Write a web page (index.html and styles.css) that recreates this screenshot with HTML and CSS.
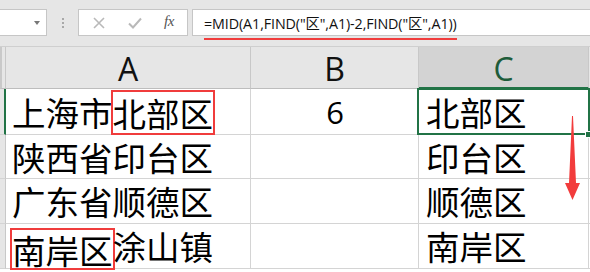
FILE: index.html
```html
<!DOCTYPE html>
<html lang="zh">
<head>
<meta charset="utf-8">
<link rel="stylesheet" href="styles.css">
</head>
<body>
<div class="toolbar">
  <div class="namebox"><span class="dd"></span></div>
  <div class="grip"><i></i><i></i><i></i></div>
  <div class="btns">
    <svg class="ico" width="12" height="12" viewBox="0 0 12 12"><path d="M1 1L11 11M11 1L1 11" stroke="#b9b9b9" stroke-width="1.6" fill="none"/></svg>
    <svg class="ico" width="14" height="12" viewBox="0 0 14 12"><path d="M1 6.5L5 10.5L13 1.5" stroke="#b9b9b9" stroke-width="2" fill="none"/></svg>
    <span class="fx">fx</span>
  </div>
  <div class="formula"><span class="ftext">=MID(A1,FIND("区",A1)-2,FIND("区",A1))</span></div>
</div>
<div class="sheet">
  <div class="rh hdr"></div>
  <div class="ch">A</div>
  <div class="ch">B</div>
  <div class="ch sel">C</div>
  <div class="edge hdr"></div>

  <div class="rh selrow"></div>
  <div class="cell ca">上海市<span class="mark m1">北部区</span></div>
  <div class="cell cb">6</div>
  <div class="cell cc active">北部区</div>
  <div class="edge"></div>

  <div class="rh"></div>
  <div class="cell ca">陕西省印台区</div>
  <div class="cell cb"></div>
  <div class="cell cc">印台区</div>
  <div class="edge"></div>

  <div class="rh"></div>
  <div class="cell ca">广东省顺德区</div>
  <div class="cell cb"></div>
  <div class="cell cc">顺德区</div>
  <div class="edge"></div>

  <div class="rh"></div>
  <div class="cell ca"><span class="mark m4">南岸区</span>涂山镇</div>
  <div class="cell cb"></div>
  <div class="cell cc">南岸区</div>
  <div class="edge"></div>

  <svg class="arrow" width="20" height="86" viewBox="0 0 20 86"><path d="M9 0L10 0L13 67L17 67L9.5 84L2 67L6 67Z" fill="#f23c3c"/></svg>
</div>
</body>
</html>
```
FILE: styles.css
```css
html, body {
  margin: 0;
  padding: 0;
  background: #ffffff;
  width: 590px;
  height: 272px;
  overflow: hidden;
}
.toolbar {
  height: 46px;
  background: #e6e6e6;
  position: relative;
  box-sizing: border-box;
  padding-top: 9px;
  display: flex;
  align-items: flex-start;
}
.namebox {
  width: 47px;
  height: 27px;
  box-sizing: border-box;
  background: #fff;
  border: 1px solid #c6c6c6;
  border-left: none;
  position: relative;
}
.dd {
  position: absolute;
  left: 34px;
  top: 11px;
  width: 0;
  height: 0;
  border-left: 3.5px solid transparent;
  border-right: 3.5px solid transparent;
  border-top: 4px solid #777;
}
.grip {
  width: 31px;
  height: 27px;
  display: flex;
  flex-direction: column;
  align-items: center;
  justify-content: center;
  gap: 2px;
}
.grip i {
  display: block;
  width: 2px;
  height: 2px;
  background: #a8a8a8;
}
.btns {
  width: 110px;
  height: 27px;
  box-sizing: border-box;
  background: #fff;
  border: 1px solid #c6c6c6;
  display: flex;
  align-items: center;
  padding-left: 14px;
}
.btns .ico:nth-child(1) { margin-right: 23px; }
.btns .ico:nth-child(2) { margin-right: 22px; }
.fx {
  font-family: "Liberation Serif", serif;
  font-style: italic;
  font-size: 15px;
  color: #555;
  letter-spacing: -0.5px;
  margin-top: -2px;
}
.formula {
  margin-left: 4px;
  flex: 1;
  height: 27px;
  box-sizing: border-box;
  background: #fff;
  border: 1px solid #c6c6c6;
  border-right: none;
  padding-left: 11px;
  display: flex;
  align-items: center;
}
.ftext {
  font-family: "Open Sans", "Noto Sans CJK SC", sans-serif;
  font-size: 14.3px;
  color: #111;
  position: relative;
  letter-spacing: -0.1px;
  white-space: nowrap;
}
.ftext::after {
  content: "";
  position: absolute;
  left: 0;
  right: 0;
  bottom: -7px;
  height: 2px;
  background: #f03c3c;
}
.sheet {
  position: relative;
  display: grid;
  grid-template-columns: 6px 245px 168px 170px 1px;
  grid-template-rows: 42px 46px 44px 45px 45px;
  border-top: 1px solid #cfcfcf;
  font-family: "Noto Sans CJK SC", sans-serif;
}
.rh {
  background: #e6e6e6;
  border-right: 1px solid #c8c8c8;
  border-bottom: 1px solid #d4d4d4;
}
.rh.hdr {
  border-left: 2px solid #c9c9c9;
  border-bottom: 1px solid #bdbdbd;
}
.rh.selrow {
  border-right: 2px solid #217346;
}
.ch {
  background: #e6e6e6;
  border-right: 1px solid #c8c8c8;
  border-bottom: 1px solid #bdbdbd;
  display: flex;
  align-items: center;
  justify-content: center;
  font-family: "Open Sans", sans-serif;
  font-size: 32px;
  color: #111;
  padding-top: 2px;
}
.ch.sel {
  background: #d3d3d3;
  color: #1e5c3a;
  border-bottom: 2px solid #217346;
}
.edge {
  background: #fff;
  border-bottom: 1px solid #d4d4d4;
}
.edge.hdr { background: #e6e6e6; border-bottom-color: #bdbdbd; }
.cell {
  border-right: 1px solid #d4d4d4;
  border-bottom: 1px solid #d4d4d4;
  font-size: 33.5px;
  line-height: 44px;
  color: #000;
  white-space: nowrap;
  display: flex;
  align-items: center;
  position: relative;
}
.ca { padding-left: 6px; }
.cb {
  justify-content: center;
  font-family: "Open Sans", sans-serif;
  font-size: 31px;
  padding-left: 1px;
}
.cc { padding-left: 7px; }
.mark {
  border: 2px solid #f03c3c;
  margin: 0 -2px;
  box-sizing: border-box;
  line-height: normal;
  display: flex;
  align-items: center;
}
.m1 { height: 45px; margin-top: 1px; }
.m4 { height: 42px; margin-top: 6px; }
.active::after {
  content: "";
  position: absolute;
  left: -2px;
  top: -1px;
  right: -2px;
  bottom: -1px;
  border: 2px solid #217346;
}
.active::before {
  content: "";
  position: absolute;
  right: -4px;
  bottom: -4px;
  width: 5px;
  height: 5px;
  background: #217346;
  border: 1px solid #fff;
  z-index: 2;
}
.arrow {
  position: absolute;
  left: 563px;
  top: 69px;
}
```
